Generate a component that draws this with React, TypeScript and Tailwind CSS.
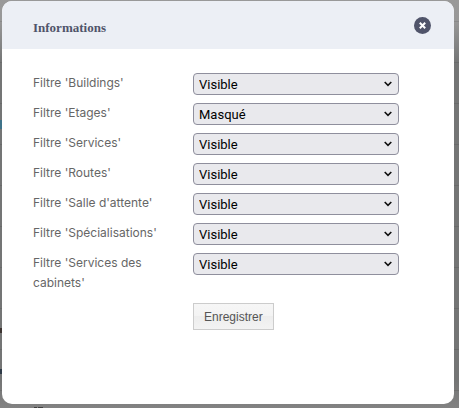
import { useState } from "react";

const filters = [
  { id: "buildings", label: "Filtre 'Buildings'", value: "Visible" },
  { id: "etages", label: "Filtre 'Etages'", value: "Masqué" },
  { id: "services", label: "Filtre 'Services'", value: "Visible" },
  { id: "routes", label: "Filtre 'Routes'", value: "Visible" },
  { id: "salle", label: "Filtre 'Salle d'attente'", value: "Visible" },
  { id: "specialisations", label: "Filtre 'Spécialisations'", value: "Visible" },
  { id: "cabinets", label: "Filtre 'Services des cabinets'", value: "Visible" },
];

function FilterRow({ id, label, value }: { id: string; label: string; value: string }) {
  const [current, setCurrent] = useState(value);
  return (
    <div className="grid grid-cols-[160px_1fr] items-start">
      <label htmlFor={id} className="pr-4 font-[Inter,sans-serif] text-xs leading-5 text-[#666666]">
        {label}
      </label>
      <div className="relative">
        <select
          id={id}
          value={current}
          onChange={(e) => setCurrent(e.target.value)}
          className="block h-[22px] w-full appearance-none rounded-[4px] border border-[#8f8f9d] bg-[#e9e9ed] pt-px pl-[5px] font-[Roboto,sans-serif] text-[13px] leading-5 text-black"
        >
          <option>Visible</option>
          <option>Masqué</option>
        </select>
        <svg
          className="pointer-events-none absolute top-2 right-[7px] h-[6px] w-2"
          viewBox="0 0 8 6"
          fill="none"
          stroke="#111"
          strokeWidth="1.6"
          aria-hidden="true"
        >
          <path d="M.7 1 4 4.3 7.3 1" />
        </svg>
      </div>
    </div>
  );
}

/* Edges of the dimmed page content that show around the dialog. */
function BackdropMarks() {
  return (
    <div aria-hidden="true">
      <span className="absolute top-[120px] left-0 h-[9px] w-1 bg-[#3f7389]" />
      <span className="absolute top-[328px] left-0 h-[5px] w-1 bg-[#3d3431]" />
      <span className="absolute top-[369px] left-0 h-[5px] w-1 bg-[#2f3b47]" />
      <span className="absolute top-[407px] left-[34px] h-px w-[3px] bg-[#3f3f3f]" />
      <span className="absolute top-[407px] left-[38px] h-px w-[5px] bg-[#3f3f3f]" />
    </div>
  );
}

export default function App() {
  return (
    <div className="relative flex min-h-screen bg-[repeating-linear-gradient(to_bottom,transparent_0px,transparent_21px,#00000018_21px,#00000018_22px,transparent_22px,transparent_41px),linear-gradient(to_bottom,#999999_0px,#989898_20px,#747575_64px,#747575_380px,#828282_408px)] pt-px pr-[5px] pb-1 pl-[2px]">
      <BackdropMarks />
      <section
        role="dialog"
        aria-labelledby="title"
        className="relative flex-1 overflow-hidden rounded-[10px] bg-white"
      >
        <header className="flex h-12 items-center justify-between bg-[#eceff5] pr-[23px] pl-[31px]">
          <h1
            id="title"
            className="pt-1.5 font-['Liberation_Serif',serif] text-[13px] leading-5 font-bold text-[#50546a]"
          >
            Informations
          </h1>
          <button type="button" aria-label="Fermer" className="block size-[17px] rounded-full">
            <svg viewBox="0 0 17 17" className="size-[17px]" aria-hidden="true">
              <circle cx="8.5" cy="8.5" r="8.5" fill="#50546a" />
              <path d="m5.8 5.8 5.4 5.4m0-5.4-5.4 5.4" stroke="#fff" strokeWidth="2" />
            </svg>
          </button>
        </header>
        <form className="pt-6 pr-[55px] pl-[31px]" onSubmit={(e) => e.preventDefault()}>
          <div className="flex flex-col gap-2">
            {filters.map((f) => (
              <FilterRow key={f.id} {...f} />
            ))}
          </div>
          <div className="pt-[10px] pl-[160px]">
            <button
              type="submit"
              className="block h-[27px] border border-[#cccccc] bg-[linear-gradient(to_bottom,#f6f6f6_0%,#f3f3f3_49%,#ededed_50%,#f3f3f3_100%)] px-[10px] font-['Liberation_Sans',sans-serif] text-xs text-[#555555]"
            >
              Enregistrer
            </button>
          </div>
        </form>
      </section>
    </div>
  );
}
